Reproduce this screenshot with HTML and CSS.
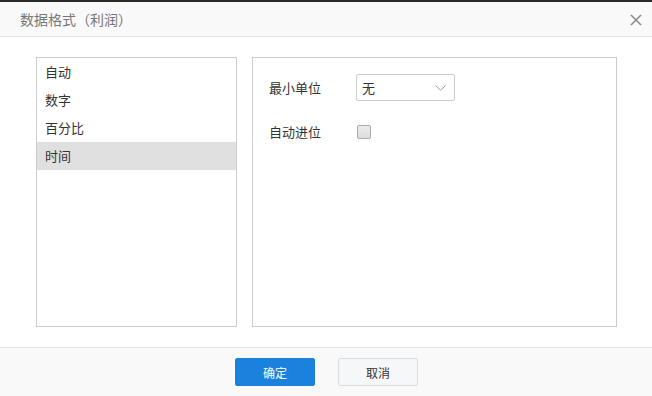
FILE: index.html
```html
<!DOCTYPE html>
<html lang="zh">
<head>
<meta charset="utf-8">
<link rel="stylesheet" href="styles.css">
</head>
<body>
<div class="dialog">
  <div class="header">
    <span class="title">数据格式（利润）</span>
    <span class="close"><svg width="12" height="12" viewBox="0 0 12 12"><path d="M1 1 L11 11 M11 1 L1 11" stroke="#8a8a8a" stroke-width="1.5" fill="none"/></svg></span>
  </div>
  <div class="content">
    <ul class="list">
      <li class="item">自动</li>
      <li class="item">数字</li>
      <li class="item">百分比</li>
      <li class="item active">时间</li>
    </ul>
    <div class="settings">
      <div class="row">
        <span class="label">最小单位</span>
        <div class="select"><span>无</span><svg width="11" height="6" viewBox="0 0 11 6"><path d="M0.5 0.5 L5.5 5.2 L10.5 0.5" stroke="#9a9a9a" stroke-width="1" fill="none"/></svg></div>
      </div>
      <div class="row row2">
        <span class="label">自动进位</span>
        <span class="checkbox"></span>
      </div>
    </div>
  </div>
  <div class="footer">
    <button class="btn primary">确定</button>
    <button class="btn">取消</button>
  </div>
</div>
</body>
</html>
```
FILE: styles.css
```css
* { box-sizing: border-box; }
html, body { margin: 0; padding: 0; background: #fff; }
body {
  font-family: "Noto Sans CJK SC", "Noto Sans", sans-serif;
  font-size: 13px;
  color: #333;
}
.dialog {
  width: 652px;
  height: 396px;
  border-top: 2px solid #2a2a2a;
  display: flex;
  flex-direction: column;
}
.header {
  height: 35px;
  background: #f9f9f9;
  border-bottom: 1px solid #e6e6e6;
  display: flex;
  align-items: center;
  justify-content: space-between;
  padding: 0 10px 0 20px;
}
.title {
  font-size: 14px;
  color: #777;
  line-height: 20px;
  text-spacing-trim: space-all;
  font-feature-settings: "fwid";
}
.close { display: flex; width: 12px; height: 12px; margin-top: 1px; }
.content {
  display: flex;
  gap: 15px;
  padding: 20px 35px 20px 36px;
  height: 310px;
}
.list {
  list-style: none;
  margin: 0;
  padding: 0;
  width: 201px;
  border: 1px solid #cccccc;
}
.item {
  height: 28px;
  line-height: 28px;
  padding-left: 8px;
}
.item.active { background: #e0e0e0; }
.settings {
  flex: 1;
  border: 1px solid #cccccc;
  padding: 16px 16px;
}
.row {
  display: flex;
  align-items: center;
  height: 27px;
}
.row2 { margin-top: 17px; }
.label { width: 87px; }
.select {
  width: 99px;
  height: 27px;
  border: 1px solid #cccccc;
  border-radius: 2px;
  display: flex;
  align-items: center;
  justify-content: space-between;
  padding: 0 8px 0 5px;
}
.select span { font-size: 13px; }
.select svg { margin-top: 1px; }
.checkbox {
  width: 14px;
  height: 14px;
  margin-left: 1px;
  margin-top: 1px;
  border: 1px solid #ababab;
  border-radius: 2px;
  background: linear-gradient(#ececec, #dcdcdc);
}
.footer {
  flex: 1;
  background: #f9f9f9;
  border-top: 1px solid #e6e6e6;
  display: flex;
  justify-content: center;
  align-items: flex-start;
  gap: 23px;
  padding-top: 10px;
  padding-left: 1px;
}
.btn {
  width: 80px;
  height: 28px;
  font-family: "Noto Sans CJK SC", "Noto Sans", sans-serif;
  font-size: 12px;
  border-radius: 2px;
  border: 1px solid #dcdcdc;
  background: #f6f7f8;
  color: #333;
  padding: 0;
}
.btn.primary {
  background: #1a82dd;
  border-color: #1a82dd;
  color: #fff;
}
```
